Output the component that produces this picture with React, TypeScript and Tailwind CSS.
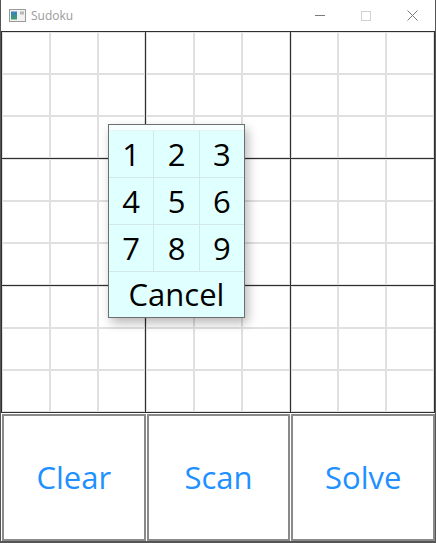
import React from 'react';

const boxes = Array.from({ length: 9 });
const cells = Array.from({ length: 9 });

function AppIcon() {
    return (
        <svg width="17" height="13" viewBox="0 0 17 13" className="shrink-0">
            <defs>
                <linearGradient id="ig" x1="0" y1="0" x2="0" y2="1">
                    <stop offset="0" stopColor="#3a7fc0" />
                    <stop offset="1" stopColor="#3aa068" />
                </linearGradient>
            </defs>
            <rect x="0.5" y="0.5" width="16" height="12" fill="#f2f2f2" stroke="#9a9a9a" />
            <rect x="2" y="2.5" width="6" height="8" fill="url(#ig)" />
            <rect x="11" y="2.5" width="4" height="3" fill="#b8b8b8" />
        </svg>
    );
}

function TitleBar() {
    return (
        <div className="h-[31px] flex items-center bg-white shrink-0">
            <div className="pl-[8px] flex items-center gap-[5px]">
                <AppIcon />
                <span className="text-[12px] text-[#9a9a9a] font-['Open_Sans',sans-serif] leading-none">
                    Sudoku
                </span>
            </div>
            <div className="ml-auto flex items-center h-full">
                <div className="w-[46px] h-full flex items-center justify-center">
                    <div className="w-[10px] h-px bg-[#7a7a7a]" />
                </div>
                <div className="w-[46px] h-full flex items-center justify-center">
                    <div className="w-[10px] h-[10px] border border-[#d0d0d0]" />
                </div>
                <div className="w-[46px] h-full flex items-center justify-center">
                    <svg width="11" height="11" viewBox="0 0 11 11">
                        <path d="M0.5 0.5 L10.5 10.5 M10.5 0.5 L0.5 10.5" stroke="#7a7a7a" strokeWidth="1" />
                    </svg>
                </div>
            </div>
        </div>
    );
}

function Board() {
    return (
        <div className="h-[382px] shrink-0 bg-[#2f2f2f] p-px grid grid-cols-3 grid-rows-3 gap-px">
            {boxes.map((_, b) => (
                <div key={b} className="grid grid-cols-3 grid-rows-3 bg-white">
                    {cells.map((_, c) => (
                        <div key={c} className="border border-[#e0e0e0] bg-white" />
                    ))}
                </div>
            ))}
        </div>
    );
}

function NumberPicker() {
    const rows = [
        ['1', '2', '3'],
        ['4', '5', '6'],
        ['7', '8', '9'],
    ];
    return (
        <div className="absolute left-[107px] top-[124px] w-[137px] h-[194px] border border-[#6e6e6e] bg-[#e0ffff] shadow-[3px_5px_10px_rgba(0,0,0,0.28)] flex flex-col font-['Open_Sans',sans-serif] text-black">
            <div className="h-[6px] bg-[#f6ffff] border-b border-[#e6f4f4]" />
            {rows.map((row, i) => (
                <div key={i} className="h-[47px] flex border-b border-[#d2e8e8]">
                    {row.map((n, j) => (
                        <div
                            key={n}
                            className={`flex-1 flex items-center justify-center text-[31px] leading-none ${
                                j < 2 ? 'border-r border-[#d2e8e8]' : ''
                            }`}
                        >
                            {n}
                        </div>
                    ))}
                </div>
            ))}
            <div className="flex-1 flex items-center justify-center text-[31px] leading-none">
                Cancel
            </div>
        </div>
    );
}

function ActionButton({ label }: { label: string }) {
    return (
        <button
            type="button"
            className="flex-1 h-full border-2 border-[#8a8a8a] bg-white flex items-center justify-center text-[31px] text-[#1e90ff] font-['Open_Sans',sans-serif] leading-none"
        >
            {label}
        </button>
    );
}

export default function App() {
    return (
        <div className="relative w-[436px] h-[543px] flex flex-col bg-white border-x border-b-2 border-[#555555] overflow-hidden">
            <TitleBar />
            <Board />
            <div className="h-[128px] pt-px pl-px flex gap-px bg-white">
                <ActionButton label="Clear" />
                <ActionButton label="Scan" />
                <ActionButton label="Solve" />
            </div>
            <NumberPicker />
        </div>
    );
}
